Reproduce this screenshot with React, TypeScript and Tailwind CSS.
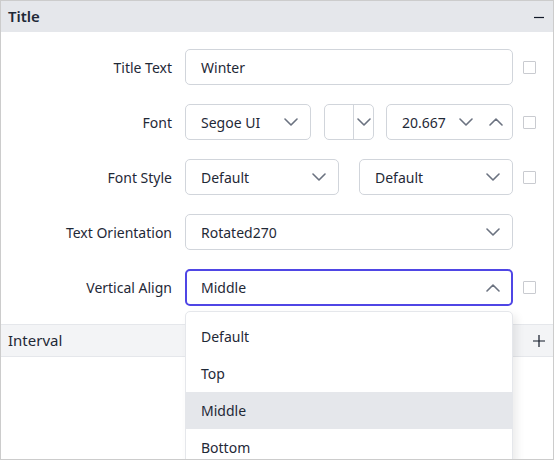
import React from "react";

const font = { fontFamily: '"Segoe UI", "Noto Sans", "Open Sans", sans-serif' };

function Chevron({ up = false }: { up?: boolean }) {
  return (
    <svg width="14" height="8" viewBox="0 0 14 8" fill="none" className="shrink-0">
      <path
        d={up ? "M1 7L7 1L13 7" : "M1 1L7 7L13 1"}
        stroke="#6b7280"
        strokeWidth="1.6"
        strokeLinecap="round"
        strokeLinejoin="round"
      />
    </svg>
  );
}

function Check() {
  return <div className="h-[13px] w-[13px] shrink-0 rounded-[1px] border border-[#c9cbd0] bg-white" />;
}

function Box({ children, className = "" }: { children?: React.ReactNode; className?: string }) {
  return (
    <div
      className={
        "flex h-[36px] items-center rounded-[5px] border border-[#d1d5db] bg-white pl-[15px] text-[14px] text-[#1f2937] " +
        className
      }
    >
      {children}
    </div>
  );
}

function Select({ value, className = "" }: { value: string; className?: string }) {
  return (
    <Box className={"justify-between pr-[12px] " + className}>
      <span>{value}</span>
      <Chevron />
    </Box>
  );
}

function Row({ label, children, check = true }: { label: string; children: React.ReactNode; check?: boolean }) {
  return (
    <div className="flex items-center">
      <div className="w-[171px] shrink-0 text-right text-[14px] text-[#1f2937]">{label}</div>
      <div className="ml-[13px] flex w-[328px] shrink-0 items-center">{children}</div>
      <div className="ml-[10px]">{check ? <Check /> : <div className="w-[13px]" />}</div>
    </div>
  );
}

export default function App() {
  return (
    <div style={font} className="relative h-[460px] w-[554px] overflow-hidden border border-[#cccccc] bg-white">
      {/* Title section header */}
      <div className="flex h-[31px] items-center justify-between bg-[#e5e7eb] pl-[7px] pr-[8px]">
        <span className="text-[15px] font-semibold text-[#1f2937]">Title</span>
        <svg width="12" height="12" viewBox="0 0 12 12">
          <path d="M1 6.5H11" stroke="#111827" strokeWidth="1.2" />
        </svg>
      </div>

      <div className="flex flex-col gap-[19px] pb-[18px] pt-[17px]">
        <Row label="Title Text">
          <Box className="w-full">Winter</Box>
        </Row>

        <Row label="Font">
          <Select value="Segoe UI" className="w-[126px]" />
          <div className="ml-[13px] flex h-[36px] w-[50px] items-stretch rounded-[5px] border border-[#d1d5db]">
            <div className="flex-1 border-r border-[#d1d5db]" />
            <div className="flex w-[19px] items-center justify-center">
              <Chevron />
            </div>
          </div>
          <Box className="ml-[12px] flex-1 pr-[9px]">
            <span className="flex-1">20.667</span>
            <div className="flex items-center gap-[16px]">
              <Chevron />
              <Chevron up />
            </div>
          </Box>
        </Row>

        <Row label="Font Style">
          <Select value="Default" className="w-[154px]" />
          <Select value="Default" className="ml-[20px] flex-1" />
        </Row>

        <Row label="Text Orientation" check={false}>
          <Select value="Rotated270" className="w-full" />
        </Row>

        <div className="relative">
          <Row label="Vertical Align">
            <div className="flex h-[37px] w-full items-center justify-between rounded-[5px] border-2 border-[#4f46e5] bg-white pl-[14px] pr-[11px] text-[14px] text-[#1f2937]">
              <span>Middle</span>
              <Chevron up />
            </div>
          </Row>

          {/* open dropdown list */}
          <div className="absolute left-[184px] top-[42px] z-10 w-[328px] rounded-t-[5px] border border-[#e5e7eb] bg-white pt-[6px] shadow-[4px_4px_8px_rgba(0,0,0,0.08)]">
            {["Default", "Top", "Middle", "Bottom"].map((o) => (
              <div
                key={o}
                className={
                  "flex h-[37px] items-center pl-[15px] text-[14px] text-[#1f2937] " +
                  (o === "Middle" ? "bg-[#e5e7eb]" : "")
                }
              >
                {o}
              </div>
            ))}
          </div>
        </div>
      </div>

      {/* Interval section header */}
      <div className="flex h-[33px] items-center justify-between border-y border-[#e5e7eb] bg-[#f3f4f6] pl-[7px] pr-[7px]">
        <span className="text-[15px] text-[#1f2937]">Interval</span>
        <svg width="14" height="14" viewBox="0 0 14 14">
          <path d="M1 7H13M7 1V13" stroke="#111827" strokeWidth="1.2" />
        </svg>
      </div>
    </div>
  );
}
